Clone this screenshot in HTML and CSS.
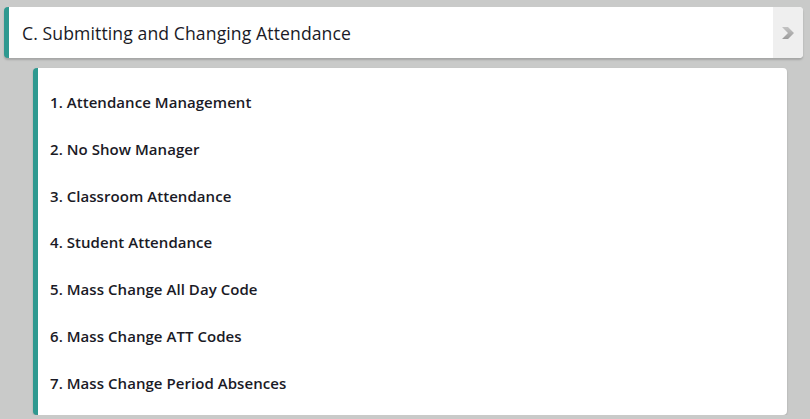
FILE: index.html
```html
<!DOCTYPE html>
<html>
<head>
<meta charset="utf-8">
<link rel="stylesheet" href="styles.css">
</head>
<body>
<div class="page">
  <div class="header">
    <div class="header-title">C. Submitting and Changing Attendance</div>
    <div class="header-toggle">
      <svg width="14" height="12" viewBox="0 0 14 12">
        <defs>
          <linearGradient id="g" x1="0" y1="0" x2="0" y2="1">
            <stop offset="0" stop-color="#c4c4c4"/>
            <stop offset="1" stop-color="#9c9c9c"/>
          </linearGradient>
        </defs>
        <path d="M1 0 H7 L13 6 L7 12 H1 L7 6 Z" fill="url(#g)"/>
      </svg>
    </div>
  </div>
  <div class="panel">
    <ul class="items">
      <li>1. Attendance Management</li>
      <li>2. No Show Manager</li>
      <li>3. Classroom Attendance</li>
      <li>4. Student Attendance</li>
      <li>5. Mass Change All Day Code</li>
      <li>6. Mass Change ATT Codes</li>
      <li>7. Mass Change Period Absences</li>
    </ul>
  </div>
</div>
</body>
</html>
```
FILE: styles.css
```css
html, body {
  margin: 0;
  padding: 0;
  background: #c9cac9;
  font-family: "Open Sans", "Noto Sans", sans-serif;
  color: #1a1a26;
}
.page {
  padding: 7px 7px 0 4px;
  display: flex;
  flex-direction: column;
}
.header {
  height: 51px;
  background: #ffffff;
  border-left: 5px solid #2f9990;
  border-radius: 4px;
  display: flex;
  align-items: stretch;
  box-shadow: 0 2px 2px rgba(0,0,0,0.18);
  overflow: hidden;
}
.header-title {
  flex: 1;
  display: flex;
  align-items: center;
  padding-left: 13px;
  font-size: 17.6px;
  letter-spacing: 0.1px;
}
.header-toggle {
  width: 30px;
  background: #efefef;
  display: flex;
  align-items: center;
  justify-content: center;
}
.panel {
  margin: 10px 16px 0 29px;
  background: #ffffff;
  border-left: 5px solid #2f9990;
  border-radius: 4px;
  box-shadow: 0 1px 2px rgba(0,0,0,0.2);
  padding: 11px 0 8px;
}
.items {
  list-style: none;
  margin: 0;
  padding: 0;
}
.items li {
  height: 46.83px;
  line-height: 46.83px;
  padding-left: 12px;
  font-size: 15px;
  font-weight: 600;
  letter-spacing: 0.05px;
}
```
